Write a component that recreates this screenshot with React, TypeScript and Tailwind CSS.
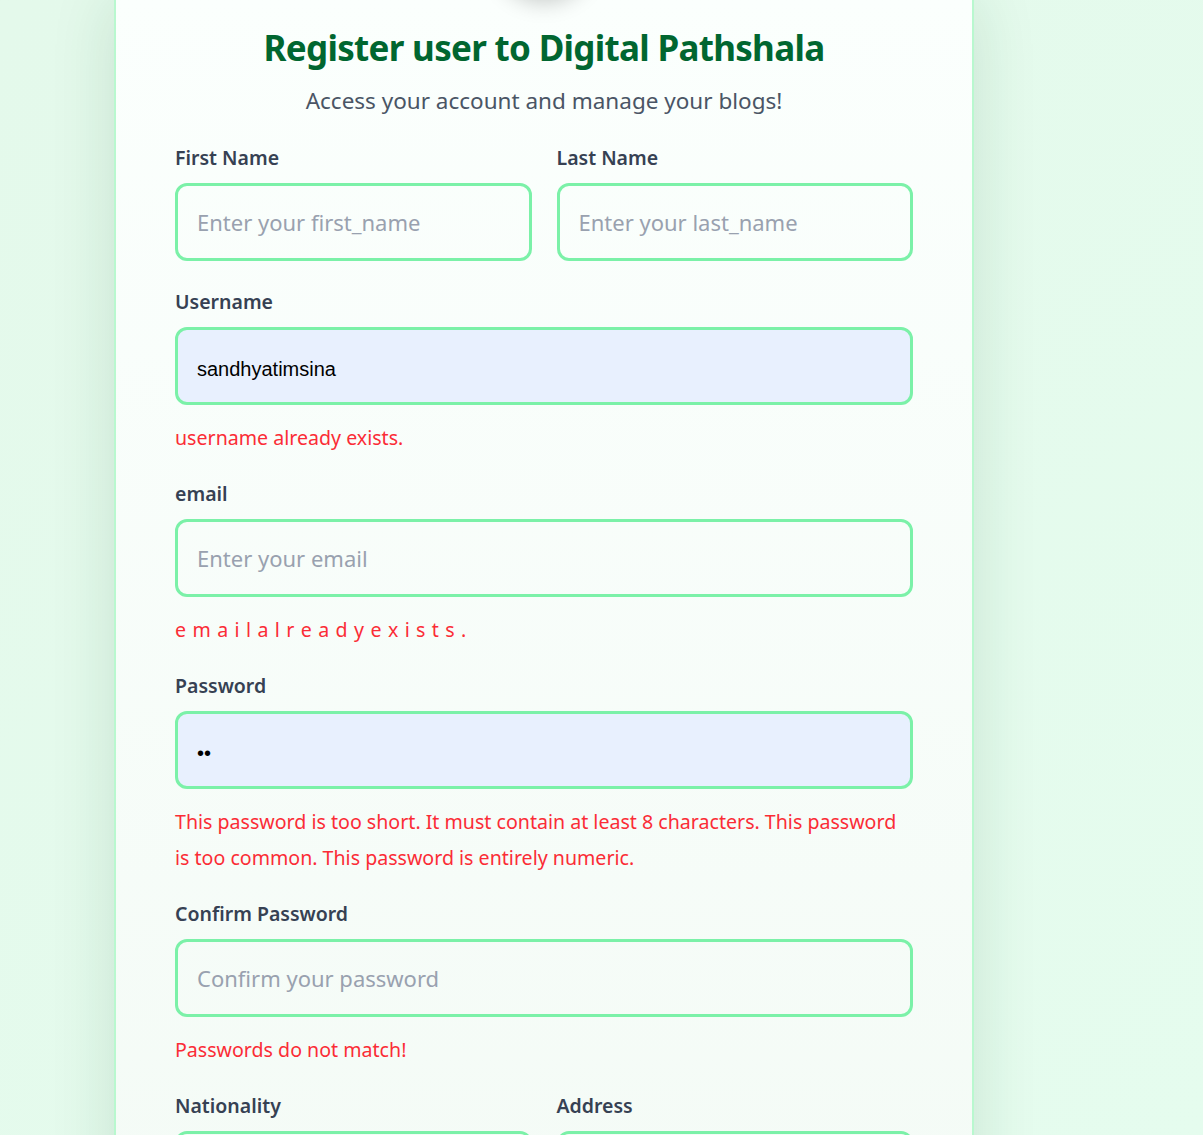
import React from 'react';

type Field = {
  label: string;
  placeholder?: string;
  value?: string;
  type?: string;
  autofill?: boolean;
  spaced?: boolean;
  error?: string[];
};

function Input({ field }: { field: Field }) {
  return (
    <input
      readOnly
      type={field.type || 'text'}
      placeholder={field.placeholder}
      value={field.value ?? ''}
      className={
        'block h-[78px] w-full rounded-[12px] border-[3px] border-green-300 px-[19px] outline-none ' +
        (field.autofill
          ? "bg-[#e8f0fe] pt-[6px] text-[20px] text-black font-['Liberation_Sans',Arial,sans-serif]"
          : 'bg-transparent text-[22px] text-gray-700 placeholder:text-gray-400')
      }
    />
  );
}

function FormField({ field }: { field: Field }) {
  return (
    <div className={field.error ? 'mb-[24px]' : 'mb-[27px]'}>
      <label className="mb-[11px] block text-[19.5px] font-semibold leading-[28px] text-gray-700">
        {field.label}
      </label>
      <Input field={field} />
      {field.error && (
        <div
          className={
            'mt-[15px] text-[19.6px] leading-[36px] text-red-500 ' +
            (field.spaced ? 'tracking-[0.65px]' : '')
          }
        >
          {field.error.map((e, i) => (
            <p key={i}>{e}</p>
          ))}
        </div>
      )}
    </div>
  );
}

export default function App() {
  return (
    <div className="h-[1135px] overflow-hidden bg-gradient-to-br from-[#e4f9eb] to-[#e5fcee] font-['Noto_Sans',sans-serif]">
      <div className="relative ml-[114px] min-h-full w-[860px] border-x-2 border-green-200 bg-gradient-to-b from-[#fbfffd] to-[#f4fbf6] px-[59px] shadow-[0_0_60px_rgba(20,83,45,0.14)]">
        {/* avatar sitting above the card, only its shadow shows */}
        <div className="absolute left-1/2 top-[-104px] h-[100px] w-[100px] -translate-x-1/2 rounded-full bg-[#fbfffd] shadow-[0_6px_22px_rgba(0,0,0,0.22)]" />

        <h1 className="pt-[25px] text-center text-[35px] font-bold leading-[45px] tracking-[-0.7px] text-green-800">
          Register user to Digital Pathshala
        </h1>
        <p className="mt-[13px] text-center text-[22.5px] leading-[35px] text-gray-600">
          Access your account and manage your blogs!
        </p>

        <form className="mt-[26px]">
          <div className="grid grid-cols-2 gap-x-[25px]">
            <FormField field={{ label: 'First Name', placeholder: 'Enter your first_name' }} />
            <FormField field={{ label: 'Last Name', placeholder: 'Enter your last_name' }} />
          </div>
          <FormField
            field={{
              label: 'Username',
              value: 'sandhyatimsina',
              autofill: true,
              error: ['username already exists.'],
            }}
          />
          <FormField
            field={{
              label: 'email',
              placeholder: 'Enter your email',
              spaced: true,
              error: ['e m a i l a l r e a d y e x i s t s .'],
            }}
          />
          <FormField
            field={{
              label: 'Password',
              type: 'password',
              value: '12',
              autofill: true,
              error: [
                'This password is too short. It must contain at least 8 characters. This password',
                'is too common. This password is entirely numeric.',
              ],
            }}
          />
          <FormField
            field={{
              label: 'Confirm Password',
              type: 'password',
              placeholder: 'Confirm your password',
              error: ['Passwords do not match!'],
            }}
          />
          <div className="grid grid-cols-2 gap-x-[25px]">
            <FormField field={{ label: 'Nationality', placeholder: 'Enter your nationality' }} />
            <FormField field={{ label: 'Address', placeholder: 'Enter your address' }} />
          </div>
        </form>
      </div>
    </div>
  );
}
